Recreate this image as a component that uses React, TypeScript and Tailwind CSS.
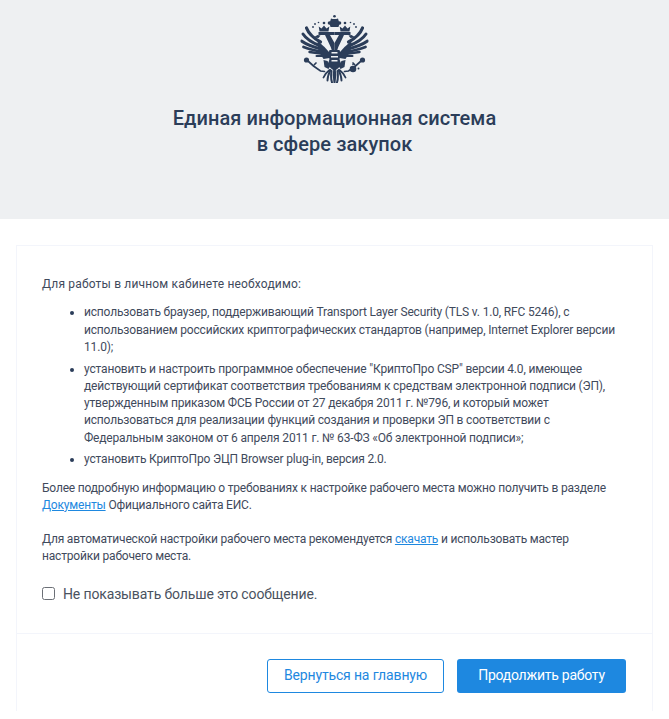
import React from "react";

function EagleHalf() {
  return (
    <g>
      {/* small pearls and arc over the side crown */}
      <circle cx="12.500" cy="12" r="0.900" />
      <circle cx="14.500" cy="9" r="0.900" />
      <circle cx="18" cy="7.500" r="0.800" />
      {/* side crown */}
      <circle cx="23.500" cy="8" r="1.300" />
      <path d="M19 16.500l-.8-5 2.800 2 2.500-3 2.500 3 2.800-2-.8 5z" />
      {/* top bar and neck of the Y */}
      <path d="M18 17h16v18h-2.800l-1-3-5.700-12h-6.500z" />
      <path d="M13 22.500l4-2.500 3 .5-2 2.500z" />
      {/* wing feathers */}
      <g fill="none" stroke="#2b3d59" strokeLinecap="round">
        <path d="M6 13Q9 21 20 27" strokeWidth="3.200" />
        <path d="M2.500 19Q7 26 20 31" strokeWidth="3" />
        <path d="M1 26Q8 31 21 34" strokeWidth="3" />
        <path d="M3 32Q11 35 23 37" strokeWidth="2.800" />
        <path d="M9 37Q16 38 24 39" strokeWidth="2.400" />
        <path d="M16 41Q20 41 25 41" strokeWidth="2" />
      </g>
      <path d="M17 26l7 6 4.500 5 .5 6-6 1-5-8z" />
      {/* sceptre */}
      <circle cx="6" cy="45" r="2.600" />
      <path d="M8 46.500l5 4.500 7 5 4 .500M14 49.500l1.500-1.500" fill="none" stroke="#2b3d59" strokeWidth="1.700" strokeLinecap="round" />
      {/* legs */}
      <path d="M23 45l4 1 3 5-2 3-4-2z" />
      {/* tail fan */}
      <g fill="none" stroke="#2b3d59" strokeLinecap="round">
        <path d="M31 56Q30 63 31.500 67.500" strokeWidth="2" />
        <path d="M30 55Q27 61 27 65.500" strokeWidth="1.900" />
        <path d="M29 55Q25 58 23 62.500" strokeWidth="1.800" />
      </g>
    </g>
  );
}

function Eagle() {
  return (
    <svg width="68" height="68" viewBox="0 0 68 68" fill="#2b3d59" className="-translate-x-[0.5px]">
      <EagleHalf />
      <g transform="translate(68 0) scale(-1 1)">
        <EagleHalf />
      </g>
      {/* top pearl and central crown */}
      <circle cx="34" cy="1.300" r="1.300" />
      <path d="M30.500 3.500q3.500 1 7 0l1.500 5-1 3.500h-8l-1-3.500z" />
      <circle cx="29" cy="8" r="1.800" />
      <circle cx="39" cy="8" r="1.800" />
      {/* white inner of the Y */}
      <path d="M29.500 20h9l-4.500 8z" fill="#eef0f2" />
      {/* breast and rider */}
      <path d="M29 35h10l1.500 5-1.500 4 1.500 5-2.500 4-4 3-4-3-2.500-4 1.500-5-1.500-4z" />
      <path d="M31 37h6v1.500h-6zM30.500 41h7v1.500h-7zM31 45h6v1.500h-6z" fill="#eef0f2" />
      {/* orb on the right */}
      <circle cx="52.500" cy="54" r="3.300" />
      <circle cx="58" cy="53.500" r="1" />
      <circle cx="52.500" cy="49.500" r="0.800" />
      {/* centre of the tail */}
      <path d="M33 52h2l.8 8-.8 8h-2l-.8-8z" />
    </svg>
  );
}

export default function App() {
  return (
    <div className="min-h-[719px] bg-white font-['Roboto',sans-serif] text-[#3f4a5c]">
      <header className="flex h-[219px] flex-col items-center bg-[#eef0f2] pt-[15px]">
        <Eagle />
        <h1 className="mt-[22px] text-center text-[20px] font-medium leading-[26px] tracking-[0.07px] text-[#2b3d59]">
          Единая информационная система
          <br />в сфере закупок
        </h1>
      </header>
      <main className="mx-4 mt-[26px] border border-b-0 border-[#f3f5fb] pb-[18px]">
        <section className="border-b border-[#f3f5fb] px-[25px] pb-[29px] pt-[30px] text-[12px] leading-[17.25px]">
          <p className="tracking-[0.17px]">Для работы в личном кабинете необходимо:</p>
          <ul className="mb-[11px] mt-[11px] list-disc pl-[42px] tracking-[-0.17px] marker:text-[#2b3d59]">
            <li className="mb-[4.5px]">
              использовать браузер, поддерживающий Transport Layer Security (TLS v. 1.0, RFC 5246), с использованием российских криптографических стандартов (например, Internet Explorer версии 11.0);
            </li>
            <li className="mb-[4.5px]">
              установить и настроить программное обеспечение "КриптоПро CSP" версии 4.0, имеющее действующий сертификат соответствия требованиям к средствам электронной подписи (ЭП), утвержденным приказом ФСБ России от 27 декабря 2011 г. №796, и который может использоваться для реализации функций создания и проверки ЭП в соответствии с Федеральным законом от 6 апреля 2011 г. № 63-ФЗ «Об электронной подписи»;
            </li>
            <li>установить КриптоПро ЭЦП Browser plug-in, версия 2.0.</li>
          </ul>
          <p className="tracking-[-0.19px]">
            Более подробную информацию о требованиях к настройке рабочего места можно получить в разделе{" "}
            <a href="#" className="text-[#1e88e0] underline">Документы</a> Официального сайта ЕИС.
          </p>
          <p className="mt-[17px] tracking-[-0.19px]">
            Для автоматической настройки рабочего места рекомендуется{" "}
            <a href="#" className="text-[#1e88e0] underline">скачать</a> и использовать мастер настройки рабочего места.
          </p>
          <label className="mt-[18px] flex items-center gap-2 text-[14px] leading-[20px] tracking-[-0.14px] text-[#4a5260]">
            <span className="h-[13px] w-[13px] shrink-0 rounded-[2.5px] border border-[#6b6f76] bg-white" />
            Не показывать больше это сообщение.
          </label>
        </section>
        <footer className="flex justify-end gap-[13px] pr-[26px] pt-[25px]">
          <button className="h-[34px] w-[177px] rounded-[3px] border border-[#1e88e0] bg-white text-[14px] tracking-[-0.15px] text-[#1e88e0]">
            Вернуться на главную
          </button>
          <button className="h-[34px] w-[169px] rounded-[3px] bg-[#1e88e0] text-[14px] tracking-[-0.25px] text-white">
            Продолжить работу
          </button>
        </footer>
      </main>
    </div>
  );
}
